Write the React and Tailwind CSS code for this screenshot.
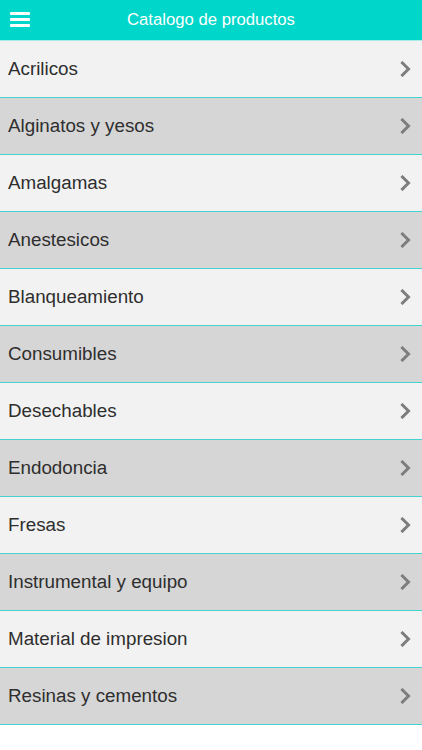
import React from 'react';

const categories = [
  'Acrilicos',
  'Alginatos y yesos',
  'Amalgamas',
  'Anestesicos',
  'Blanqueamiento',
  'Consumibles',
  'Desechables',
  'Endodoncia',
  'Fresas',
  'Instrumental y equipo',
  'Material de impresion',
  'Resinas y cementos',
];

const Chevron = () => (
  <svg width="12" height="16" viewBox="0 0 12 16" fill="none">
    <path d="M2.5 2 L8.5 8 L2.5 14" stroke="#7d7d7d" strokeWidth="3" strokeLinecap="square" strokeLinejoin="miter" />
  </svg>
);

const App = () => {
  return (
    <div className="min-h-screen bg-white font-['Liberation_Sans',Arial,sans-serif]">
      {/* Header */}
      <div className="h-[41px] bg-[#00d6c9] flex items-center relative border-b border-[#a8ece8]">
        <button className="absolute left-[10px] top-[12px] flex flex-col gap-[3px]">
          <span className="block w-[20px] h-[3px] bg-white rounded-[1px]" />
          <span className="block w-[20px] h-[3px] bg-white rounded-[1px]" />
          <span className="block w-[20px] h-[3px] bg-white rounded-[1px]" />
        </button>
        <h1 className="w-full text-center text-white text-[16.7px] leading-none">Catalogo de productos</h1>
      </div>

      {/* List */}
      <ul>
        {categories.map((name, i) => (
          <li
            key={name}
            className={`h-[57px] flex items-center justify-between pl-[8px] pr-[10px] border-b border-[#45d3cf] ${
              i % 2 === 0 ? 'bg-[#f2f2f2]' : 'bg-[#d6d6d6]'
            }`}
          >
            <span className="text-[18.8px] text-[#2e2e2e]">{name}</span>
            <Chevron />
          </li>
        ))}
      </ul>
    </div>
  );
};

export default App;
